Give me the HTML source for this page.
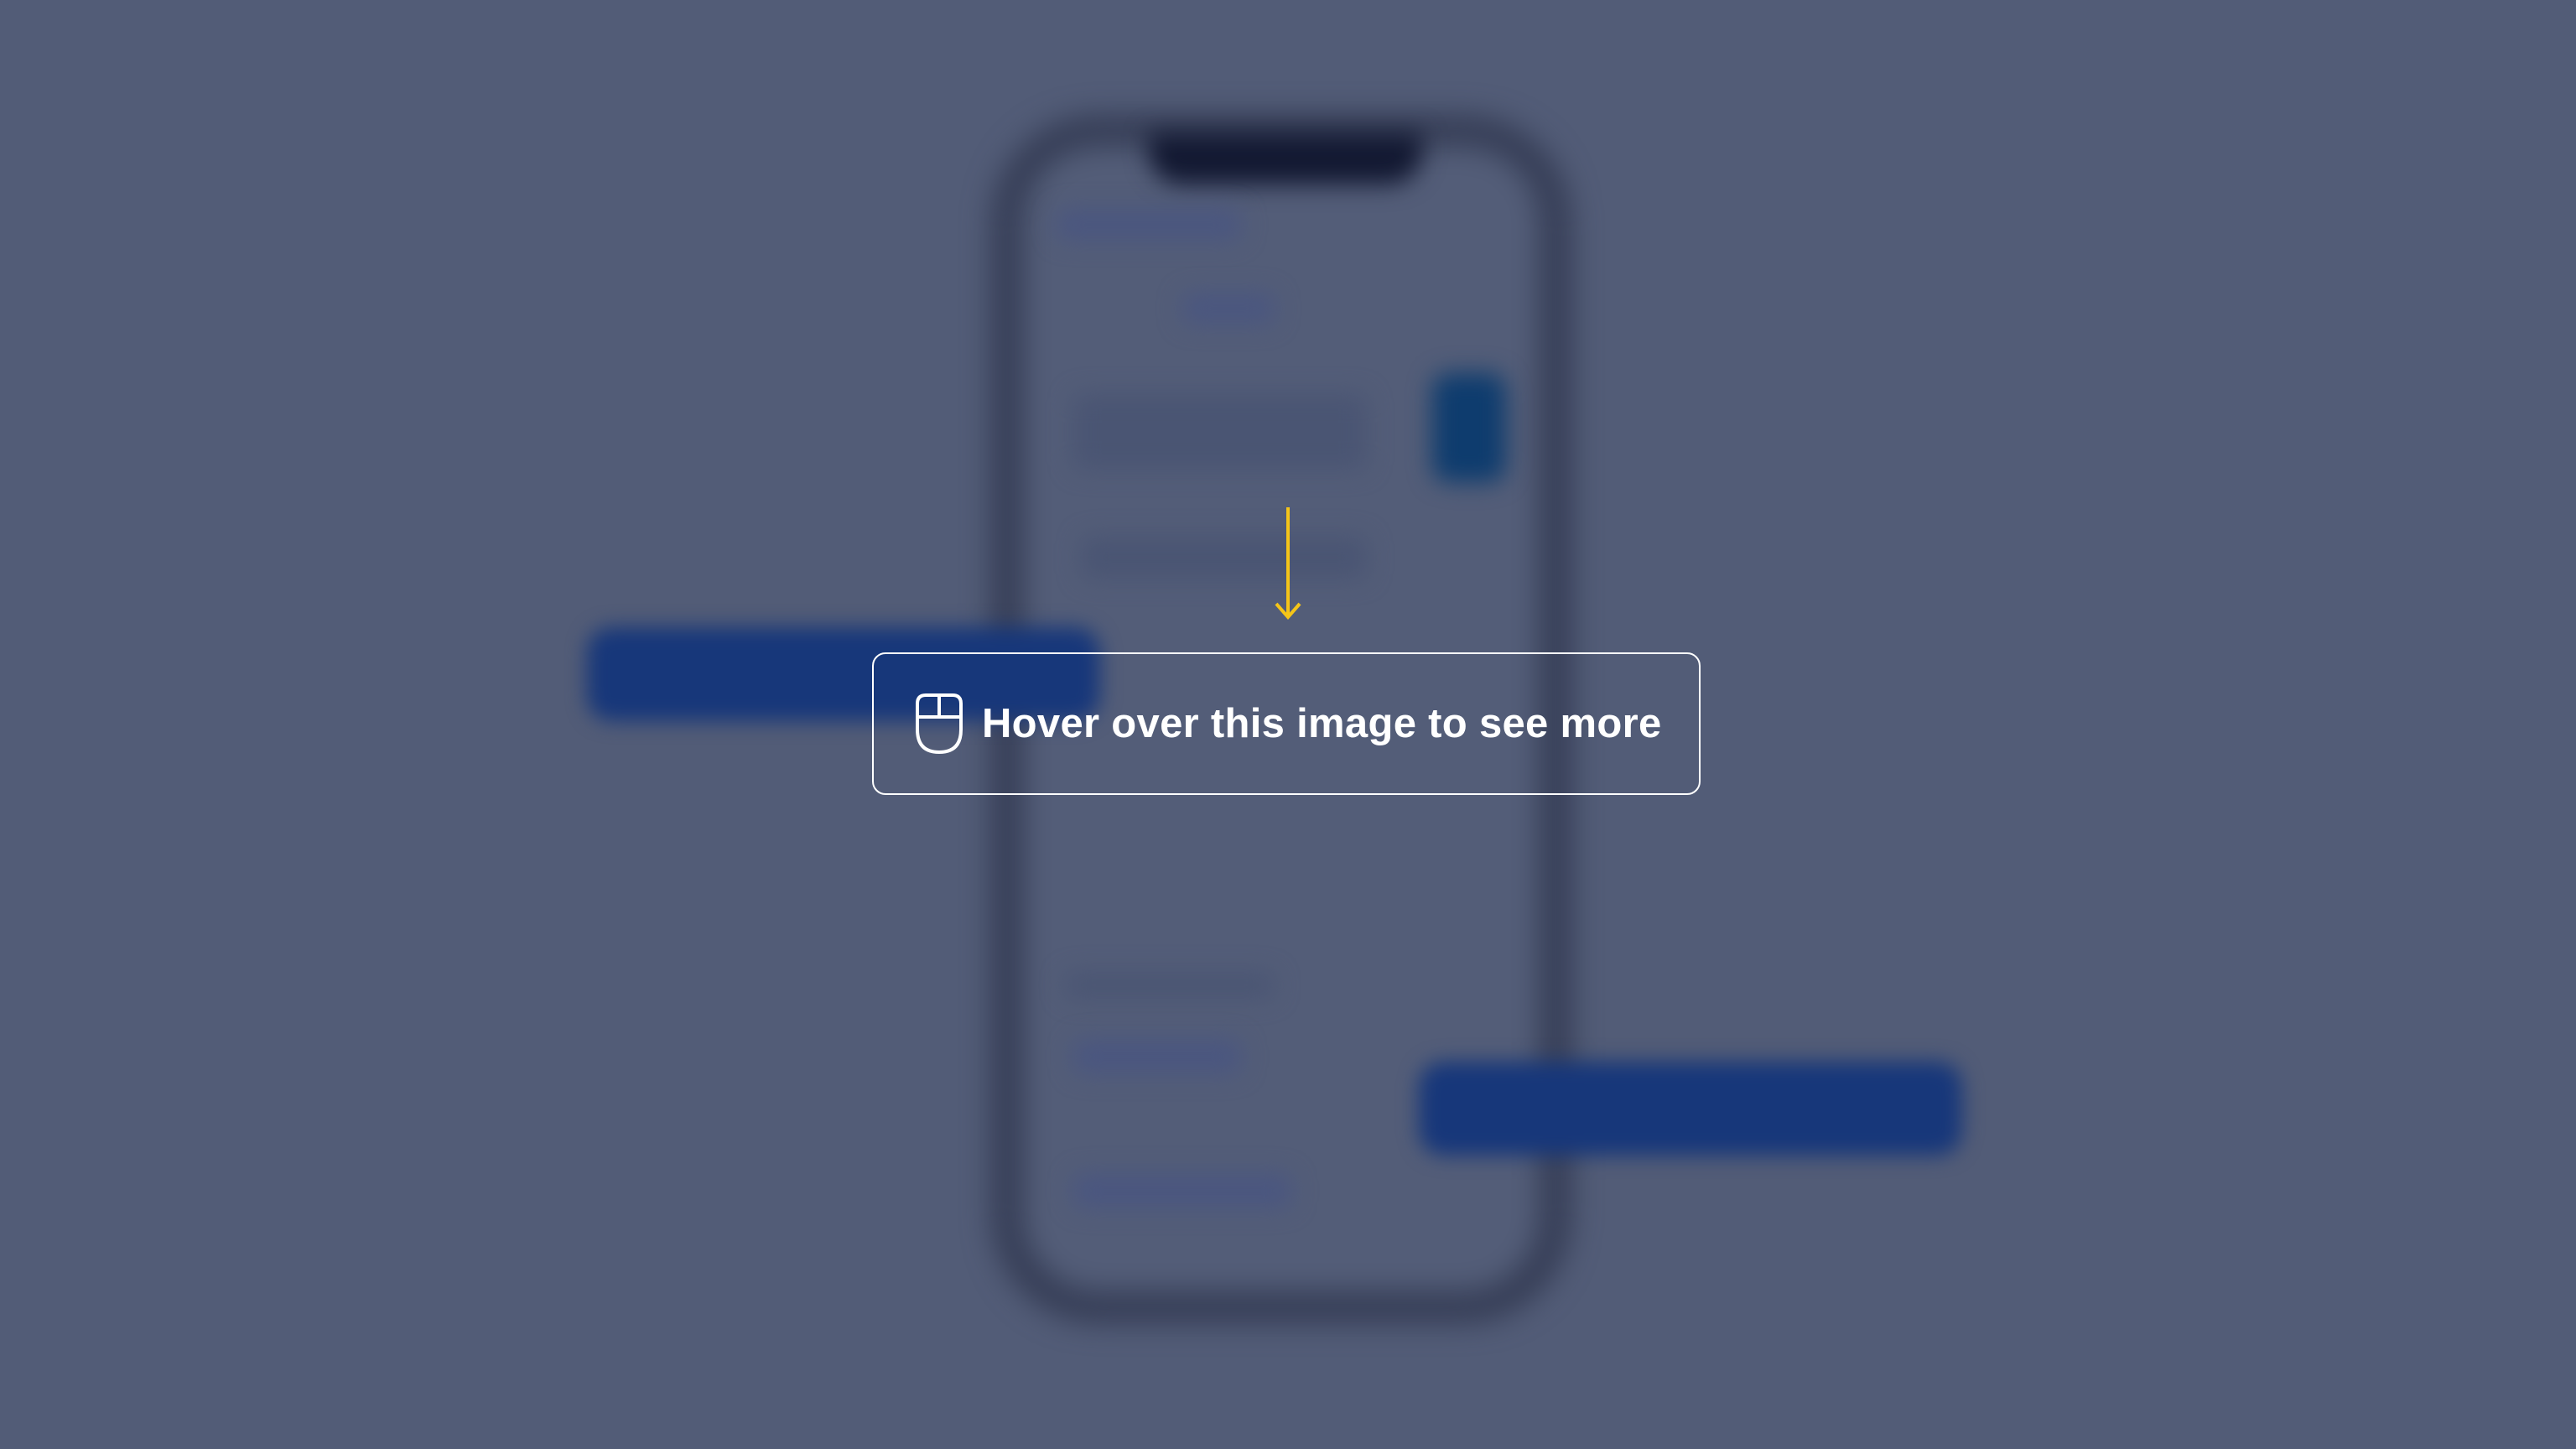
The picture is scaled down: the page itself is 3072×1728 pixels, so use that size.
<!DOCTYPE html>
<html><head><meta charset="utf-8"><style>
html,body{margin:0;padding:0}
body{width:3072px;height:1728px;background:#525c77;position:relative;overflow:hidden;font-family:"Liberation Sans",sans-serif}
.b{position:absolute}
.phone{left:1185px;top:140px;width:686px;height:1435px;border:32px solid #30374f;border-radius:125px;box-sizing:border-box;filter:blur(18px);background:#535d78}
.notch{left:1370px;top:158px;width:326px;height:62px;background:#131932;border-radius:0 0 40px 40px;filter:blur(14px)}
.blob1{left:700px;top:748px;width:612px;height:112px;background:#17377a;border-radius:30px;filter:blur(12px)}
.blob2{left:1692px;top:1266px;width:648px;height:112px;background:#17377a;border-radius:30px;filter:blur(12px)}
.btn{left:1708px;top:445px;width:88px;height:130px;background:#0e3c6e;border-radius:20px;filter:blur(14px)}
.bar{background:#4a5573;filter:blur(14px);border-radius:12px}
.box{left:1040px;top:778px;width:988px;height:170px;border:2px solid #fff;border-radius:16px;box-sizing:border-box}
.txt{left:1171px;top:830px;color:#fff;font-weight:bold;font-size:49px;letter-spacing:0.3px;line-height:66px;white-space:nowrap}
</style></head><body>
<div class="b phone"></div>
<div class="b notch"></div>
<div class="b bar" style="left:1260px;top:250px;width:220px;height:36px;background:#4a5680"></div>
<div class="b bar" style="left:1410px;top:350px;width:110px;height:36px;background:#4a5680"></div>
<div class="b bar" style="left:1280px;top:470px;width:350px;height:90px"></div>
<div class="b bar" style="left:1290px;top:640px;width:340px;height:50px"></div>
<div class="b bar" style="left:1270px;top:1160px;width:250px;height:30px"></div>
<div class="b bar" style="left:1280px;top:1240px;width:200px;height:40px;background:#4a5680"></div>
<div class="b bar" style="left:1280px;top:1400px;width:260px;height:40px;background:#4a5680"></div>
<div class="b btn"></div>
<div class="b blob1"></div>
<div class="b blob2"></div>
<svg class="b" style="left:1516px;top:600px" width="40" height="142" viewBox="0 0 40 142">
<path d="M20 5V136M6 120L20 136L34 120" stroke="#f5c518" stroke-width="4" fill="none"/>
</svg>
<div class="b box"></div>
<svg class="b" style="left:1090px;top:826px" width="60" height="74" viewBox="0 0 60 74">
<path d="M14 3H46Q56 3 56 13V44Q56 71 30 71Q4 71 4 44V13Q4 3 14 3ZM4 29H56M30 3V29" stroke="#fff" stroke-width="4" fill="none"/>
</svg>
<div class="b txt">Hover over this image to see more</div>
</body></html>
